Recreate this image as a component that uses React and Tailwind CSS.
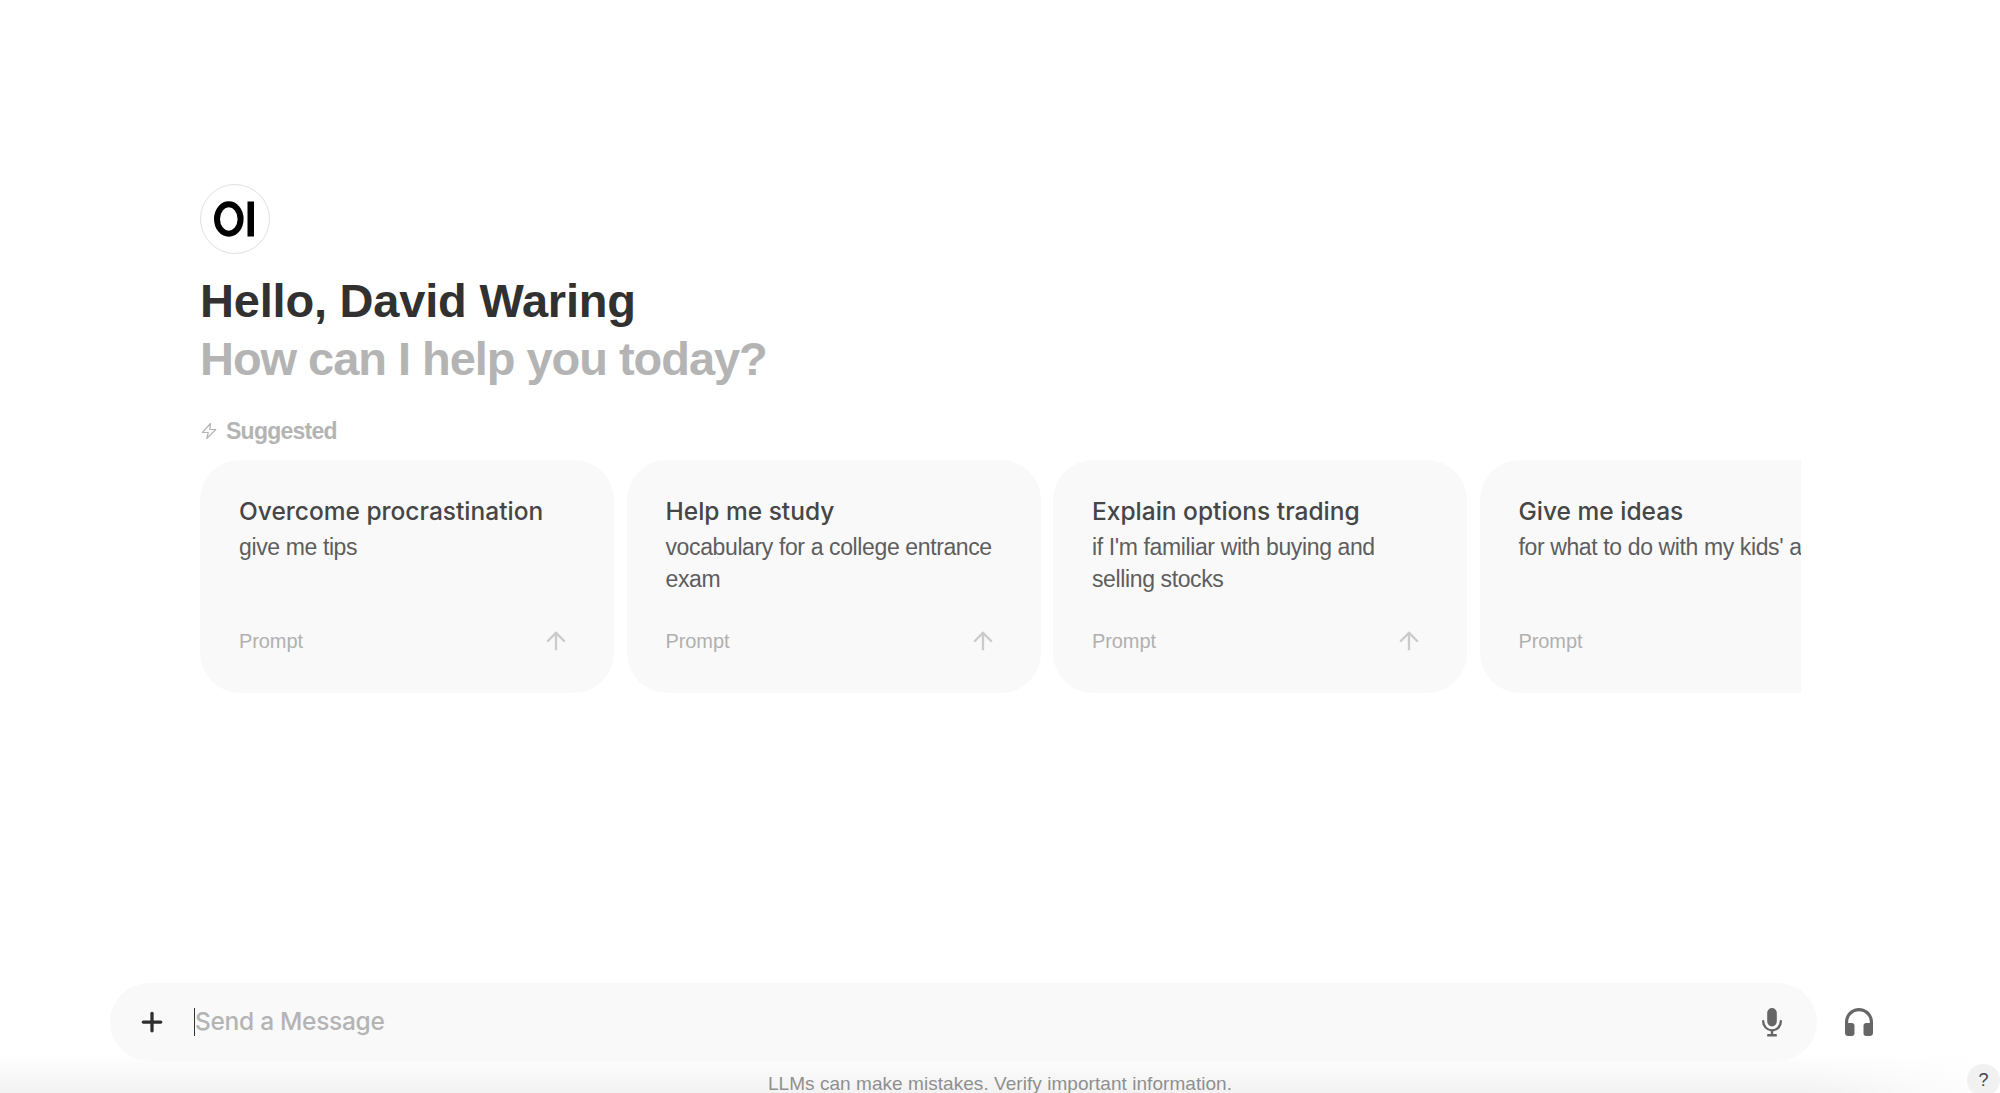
import React from "react";
import { ArrowUp, Plus } from "lucide-react";

const cards = [
  { t: "Overcome procrastination", s: "give me tips" },
  { t: "Help me study", s: "vocabulary for a college entrance exam" },
  { t: "Explain options trading", s: "if I'm familiar with buying and selling stocks" },
  { t: "Give me ideas", s: "for what to do with my kids' art", nowrap: true, noArrow: true },
];

function Card({ t, s, nowrap, noArrow }) {
  return (
    <div className="w-[414px] h-[233px] shrink-0 rounded-[40px] bg-[#f9f9f9] pl-[39px] pr-[38px] pt-[33px] pb-[38px] flex flex-col justify-between">
      <div>
        <div className="text-[24.5px] leading-[36px] font-medium font-['Inter',sans-serif] text-[#464646] whitespace-nowrap">{t}</div>
        <div className={`text-[23px] leading-[32px] text-[#5e5e5e] mt-[2px] w-[340px] tracking-[-0.38px] ${nowrap ? "whitespace-nowrap" : ""}`}>{s}</div>
      </div>
      <div className="flex items-center justify-between h-[28px]">
        <span className="text-[20px] text-[#b0b0b0] tracking-[-0.1px]">Prompt</span>
        {!noArrow && <ArrowUp className="w-[28px] h-[28px] text-[#cbcbcb] mr-[6px]" strokeWidth={2} />}
      </div>
    </div>
  );
}

export default function App() {
  return (
    <div className="h-screen flex flex-col overflow-hidden bg-white font-['Liberation_Sans',Arial,sans-serif] relative">
      <main className="flex-1 pt-[184px] pl-[200px] pr-[199px] min-h-0">
        <div className="w-[70px] h-[70px] rounded-full border border-[#e0e0e0] flex items-center justify-center text-black">
          <svg viewBox="0 0 41 36" className="w-[41px] h-[36px] mr-[1px]">
            <ellipse cx="14.800" cy="18" rx="11.800" ry="14.700" fill="none" stroke="#000" strokeWidth="6" />
            <rect x="33.500" y="0.500" width="6.500" height="35" fill="#000" />
          </svg>
        </div>
        <h1 className="mt-[18px] text-[47px] leading-[58px] font-bold text-[#313131] tracking-[-0.2px]">Hello, David Waring</h1>
        <h2 className="text-[47px] leading-[58px] font-bold text-[#b4b4b4] tracking-[-1.04px]">How can I help you today?</h2>
        <div className="mt-[28px] flex items-center gap-[8px] h-[30px] text-[#b4b4b4]">
          <svg viewBox="0 0 24 24" className="w-[18px] h-[20px]" fill="none" stroke="currentColor" strokeWidth="1.6" strokeLinejoin="round">
            <path d="M14 2 3 14h8l-2 8 12-12h-8l1-8Z" />
          </svg>
          <span className="text-[23px] font-bold tracking-[-0.75px]">Suggested</span>
        </div>
        <div className="mt-[14px] flex gap-[12.5px] overflow-hidden">
          {cards.map((c) => <Card key={c.t} {...c} />)}
        </div>
      </main>

      <div className="relative">
        <div className="relative z-10 flex items-center pl-[110px] pr-[125px] gap-[26px] h-[78px]">
          <div className="flex-1 h-[78px] rounded-[39px] bg-[#f9f9f9] flex items-center pl-[27px] pr-[29px]">
            <Plus className="w-[30px] h-[30px] text-[#2e2e2e] shrink-0" strokeWidth={2.6} />
            <div className="ml-[27px] w-px h-[28px] bg-[#333] shrink-0" />
            <span className="text-[24.5px] font-['Inter',sans-serif] text-[#b4b4b4] font-medium flex-1 tracking-[-0.3px] mt-[-2px]">Send a Message</span>
            <svg viewBox="0 0 24 24" className="w-[32px] h-[32px] text-[#666]" fill="currentColor">
              <path d="M12 1.5a3.6 3.6 0 0 0-3.6 3.6v6.6a3.6 3.6 0 0 0 7.2 0V5.100A3.600 3.600 0 0 0 12 1.500Z" />
              <path d="M5.400 10.500a.9.9 0 0 1 .9.9v.3a5.700 5.700 0 0 0 11.400 0v-.3a.9.9 0 0 1 1.800 0v.3a7.500 7.500 0 0 1-6.600 7.440V21h2.700v1.800H8.400V21h2.700v-2.060A7.500 7.500 0 0 1 4.500 11.700v-.3a.9.9 0 0 1 .9-.9Z" />
            </svg>
          </div>
          <svg viewBox="0 0 32 32" className="w-[32px] h-[32px] text-[#666] shrink-0" fill="currentColor">
            <path d="M16 2C8.300 2 2 8.200 2 16v11c0 1.900 1.500 3 3 3h4c1.400 0 2.500-1.100 2.500-2.500v-8c0-1.400-1.100-2.500-2.500-2.500H5.200v-1c0-6 4.800-10.800 10.800-10.800S26.800 10 26.800 16v1H23c-1.400 0-2.500 1.100-2.500 2.500v8c0 1.400 1.100 2.500 2.500 2.500h4c1.500 0 3-1.100 3-3V16C30 8.200 23.700 2 16 2Z" />
          </svg>
        </div>
        <div className="relative mt-[-8px] h-[40px] flex items-end justify-center bg-gradient-to-b from-white to-[#f2f2f2]">
          <span className="text-[19px] leading-[22px] text-[#8f8f8f] mb-[-2px] tracking-[0.05px]">LLMs can make mistakes. Verify important information.</span>
          <div className="absolute right-0 top-0 bottom-0 w-[200px] bg-gradient-to-r from-transparent to-white" />
        </div>
        <div className="absolute z-20 right-[0px] bottom-[-3px] w-[33px] h-[32px] rounded-full bg-[#f1f1f1] flex items-center justify-center text-[18px] text-[#444]">?</div>
      </div>
    </div>
  );
}
